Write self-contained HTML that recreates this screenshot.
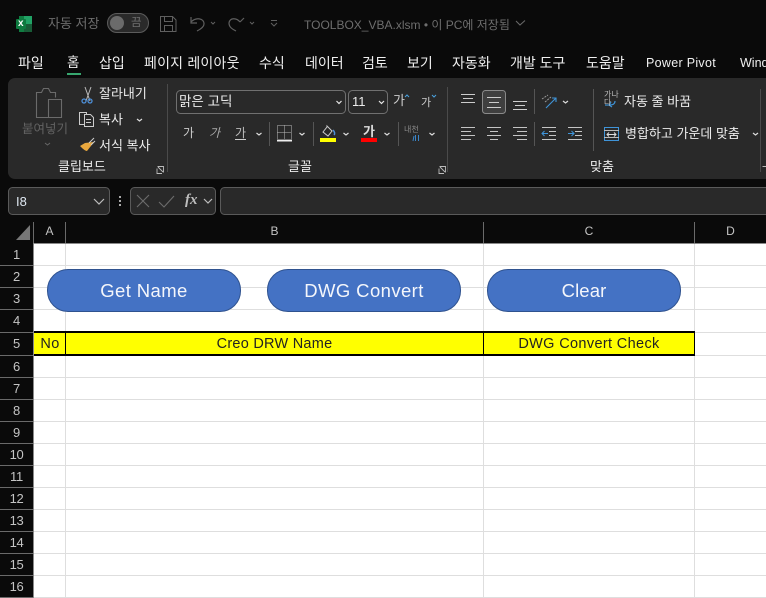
<!DOCTYPE html>
<html lang="ko"><head><meta charset="utf-8">
<style>
html,body{margin:0;padding:0;background:#0a0a0a}
#p{position:relative;width:766px;height:598px;overflow:hidden;background:#0a0a0a;font-family:"Liberation Sans","Noto Sans CJK KR",sans-serif;font-size:13px;color:#ececec}
.t{position:absolute;white-space:nowrap;line-height:16px}
svg{position:absolute;left:0;top:0}
.rn{position:absolute;left:0;width:33px;text-align:center;color:#c4c4c4;font-size:13px;letter-spacing:-.3px;line-height:22px;height:22px}
.btn{position:absolute;top:269px;width:192px;height:41px;border:1px solid #2f528f;border-radius:21px;background:#4472c4;color:#f4f6fb;text-align:center;font-size:18.5px;line-height:41px;letter-spacing:.4px}
.c{position:absolute;top:334px;height:20px;line-height:20px;text-align:center;color:#222;font-size:14.5px;letter-spacing:.25px}
.tab{font-size:14px;top:55px;color:#f0f0f0}
</style></head><body><div id="p">

<svg width="766" height="598" viewBox="0 0 766 598" fill="none">
<!-- excel logo -->
<rect x="19" y="16" width="13" height="16" fill="#107c41"/>
<rect x="24" y="16" width="8" height="8" fill="#21a366"/>
<rect x="24" y="24" width="8" height="8" fill="#185c37"/>
<rect x="16" y="19" width="10" height="10" rx="1" fill="#0e7a3f"/>
<!-- toggle -->
<rect x="107.500" y="13.500" width="41" height="19" rx="9.500" fill="#2a2a2a" stroke="#5c5c5c"/>
<circle cx="117" cy="23" r="7" fill="#6b6b6b"/>
<!-- save -->
<path d="M160.500 16.500h12l3.500 3.500v11.500h-15.500zM164.500 16.500v5h8v-5M164.500 31.500v-6h8v6" stroke="#5f5f5f"/>
<!-- undo redo -->
<path d="M191 17v6h6M191 22c5-5 13-4 13 2 0 3-3 5-7 7" stroke="#5f5f5f" stroke-width="1.200"/>
<path d="M244 18l-4 4M240 22c-3-4-10-5-11 1 0 4 3 6 7 8" stroke="#5f5f5f" stroke-width="1.200"/>
<path d="M211 22l2 2 2-2M250 22l2 2 2-2" stroke="#5f5f5f"/>
<path d="M271 20.500h6M271 23l3 3 3-3" stroke="#5f5f5f"/>
<path d="M516 21l4 4 5-4.500" stroke="#6a6a6a"/>
<!-- home underline -->
<rect x="67" y="73" width="14" height="2" fill="#37a76f"/>

<!-- ribbon -->
<rect x="8" y="78" width="780" height="101" rx="7" fill="#292929"/>
<path d="M167.500 84v88M447.500 87v85M760.500 89v83" stroke="#4a4a4a"/>
<!-- paste -->
<path d="M48.500 117.500h-12v-25h5l2-4h5l2 4h5v5M48.500 99.500h13v18h-13z" stroke="#6b6b6b" stroke-width="1.100"/>
<path d="M45 143l2.500 2 2.500-2" stroke="#666"/>
<!-- scissors -->
<path d="M85 87l5 14M91 87l-5 14" stroke="#bbb"/>
<circle cx="84" cy="101" r="2" stroke="#4d8fd8" stroke-width="1.300"/>
<circle cx="90" cy="101" r="2" stroke="#4d8fd8" stroke-width="1.300"/>
<!-- copy -->
<path d="M84.500 124.500h-5v-12h7v2M84.500 114.500h6l3 3v9h-9zM86 119.500h5M86 122.500h5" stroke="#ccc"/>
<path d="M137 119l2.500 2 2.500-2" stroke="#ddd" stroke-width="1.200"/>
<!-- painter -->
<path d="M85 143l9-1-7 9c-2 0-5-3-7-5z" fill="#e9a73d"/>
<path d="M89 143l5-5M91 145l4-4" stroke="#ccc"/>
<path d="M157.500 166.500h6v6M158 167l5 5M162 173.500h-5v-5" stroke="#bbb" stroke-width=".9"/>

<!-- font combo -->
<rect x="176.500" y="90.500" width="169" height="23" rx="4" fill="#292929" stroke="#707070"/>
<rect x="348.500" y="90.500" width="39" height="23" rx="4" fill="#292929" stroke="#707070"/>
<path d="M336.500 101l2.500 2.500 2.500-2.500M379 101l2.500 2.500 2.500-2.500" stroke="#e6e6e6" stroke-width="1.200"/>
<path d="M405 97l2-2 2 2" stroke="#4aa3e0"/>
<path d="M432 95l2 2 2-2" stroke="#4aa3e0"/>
<!-- font row 2 -->
<rect x="235" y="139" width="11" height="1" fill="#ccc"/>
<path d="M256.500 133l2.500 2 2.500-2M299.500 133l2.500 2 2.500-2M343.500 133l2.500 2 2.500-2M384.500 133l2.500 2 2.500-2M429.500 133l2.500 2 2.500-2" stroke="#ddd" stroke-width="1.200"/>
<path d="M269.500 122v24M313.500 122v24M398.500 122v24" stroke="#555"/>
<path d="M277.500 125.500h14v14h-14zM284.500 125.500v14M277.500 132.500h14" stroke="#bbb" stroke-dasharray="1 1"/>
<rect x="277" y="140" width="15" height="1.500" fill="#eee"/>
<path d="M327 126l5 5-4 5-5-4 4-5z" stroke="#ccc"/><path d="M333 130c2 2 2 4 1 5" stroke="#4d8fd8" stroke-width="1.500"/>
<rect x="320" y="138" width="16" height="4" fill="#ff0"/>
<rect x="361" y="138" width="16" height="4" fill="#f00"/>
<path d="M415.500 141v-6M418.500 141v-6M413 141l1-5" stroke="#3a85c8"/>
<path d="M439.500 166.500h6v6M440 167l5 5M444 173.500h-5v-5" stroke="#bbb" stroke-width=".9"/>

<!-- align -->
<rect x="482.500" y="90.500" width="23" height="23" rx="3" fill="#3f3f3f" stroke="#8a8a8a"/>
<path d="M461 94.500h14M463 98.500h10M461 102.500h14M487 97.500h14M489 102.500h10M487 107.500h14M513 101.500h14M515 105.500h10M513 109.500h14" stroke="#ccc"/>
<path d="M534.500 89v25M534.500 122v24M593.500 89v62" stroke="#555"/>
<path d="M546 108l10-10M552 98h4v4" stroke="#3f94d8" stroke-width="1.100"/>
<path d="M542 99l6-4M545 102l6-5" stroke="#999" stroke-dasharray="2 1"/>
<path d="M563 101l2.500 2 2.500-2" stroke="#ddd" stroke-width="1.200"/>
<path d="M461 127.500h14M461 131.500h10M461 135.500h14M461 139.500h10M487 127.500h14M490 131.500h8M487 135.500h14M490 139.500h8M513 127.500h14M517 131.500h10M513 135.500h14M517 139.500h10" stroke="#c4c4c4"/>
<path d="M542 127.500h14M549 131.500h7M549 135.500h7M542 139.500h14M568 127.500h14M575 131.500h7M575 135.500h7M568 139.500h14" stroke="#c4c4c4"/>
<path d="M548 133.500h-6M544.500 131l-2.500 2.500 2.500 2.500M568 133.500h6M571.500 131l2.500 2.500-2.500 2.500" stroke="#3f94d8"/>
<path d="M605 105c4 0 10 1 10-4M611 102l-2 3 3 2" stroke="#3f94d8" stroke-width="1.200"/>
<rect x="604.500" y="127.500" width="14" height="13" stroke="#3f94d8" fill="none"/>
<path d="M604 130.500h15M604 137.500h15" stroke="#bbb"/><path d="M607 134.500h9M609 132.500l-2 2 2 2M614 132.500l2 2-2 2" stroke="#ddd"/>
<path d="M753 133l2.500 2 2.500-2" stroke="#ddd" stroke-width="1.200"/>
<path d="M762.500 166.500h6v6" stroke="#bbb"/>

<!-- formula bar -->
<rect x="8.500" y="187.500" width="101" height="27" rx="4" fill="#292929" stroke="#5a5a5a"/>
<rect x="130.500" y="187.500" width="85" height="27" rx="4" fill="#292929" stroke="#5a5a5a"/>
<rect x="220.500" y="187.500" width="560" height="27" rx="4" fill="#292929" stroke="#5a5a5a"/>
<path d="M94 199l5 5 5-5M204 199l4 4 4-4" stroke="#bdbdbd" stroke-width="1.200"/>
<circle cx="120" cy="197" r="1" fill="#ddd"/><circle cx="120" cy="201" r="1" fill="#ddd"/><circle cx="120" cy="205" r="1" fill="#ddd"/>
<path d="M137 195l12 12M149 195l-12 12M159 202l5 5 10-11" stroke="#6c6c6c" stroke-width="1.100"/>

<!-- grid white -->
<rect x="33" y="243" width="733" height="355" fill="#fff"/>
<rect x="0" y="219" width="766" height="24" fill="#0a0a0a"/>
<rect x="0" y="243" width="33" height="355" fill="#0a0a0a"/>
<path d="M30 225v15H16z" fill="#777"/>
<g stroke="#dedede">
<path d="M65.500 243v355M483.500 243v355M694.500 243v355"/>
<path d="M33 265.500h733M33 287.500h733M33 309.500h733M33 332.500h733M33 355.500h733M33 377.500h733M33 399.500h733M33 421.500h733M33 443.500h733M33 465.500h733M33 487.500h733M33 509.500h733M33 531.500h733M33 553.500h733M33 575.500h733M33 597.500h733"/>
</g>
<g stroke="#6a6a6a">
<path d="M33.500 222v21M65.500 222v21M483.500 222v21M694.500 222v21"/>
<path d="M0 265.500h33M0 287.500h33M0 309.500h33M0 332.500h33M0 355.500h33M0 377.500h33M0 399.500h33M0 421.500h33M0 443.500h33M0 465.500h33M0 487.500h33M0 509.500h33M0 531.500h33M0 553.500h33M0 575.500h33M0 597.500h33"/>
</g>
<rect x="33" y="243" width="733" height="1" fill="#8a8a8a"/>
<rect x="33" y="243" width="1" height="355" fill="#8a8a8a"/>
<!-- header row 5 -->
<rect x="34" y="333" width="661" height="22" fill="#ff0"/>
<rect x="34" y="331" width="661" height="2" fill="#000"/>
<rect x="34" y="354" width="661" height="2" fill="#000"/>
<rect x="65" y="331" width="1" height="25" fill="#000"/>
<rect x="483" y="331" width="1" height="25" fill="#000"/>
<rect x="694" y="331" width="1" height="25" fill="#000"/>
</svg>

<div class="t" style="left:18px;top:16px;font-size:10px;font-weight:bold;color:#fff">x</div>
<div class="t" style="left:48px;top:16px;color:#6e6e6e;font-size:13px">자동 저장</div>
<div class="t" style="left:131px;top:15px;color:#707070;font-size:11.500px">끔</div>
<div class="t" style="left:304px;top:17px;color:#6e6e6e;font-size:12px">TOOLBOX_VBA.xlsm  •  이 PC에 저장됨</div>

<div class="t tab" style="left:18px">파일</div>
<div class="t tab" style="left:67px;font-size:13.500px">홈</div>
<div class="t tab" style="left:99px">삽입</div>
<div class="t tab" style="left:144px;letter-spacing:.2px">페이지 레이아웃</div>
<div class="t tab" style="left:259px">수식</div>
<div class="t tab" style="left:305px">데이터</div>
<div class="t tab" style="left:362px">검토</div>
<div class="t tab" style="left:407px">보기</div>
<div class="t tab" style="left:452px">자동화</div>
<div class="t tab" style="left:510px">개발 도구</div>
<div class="t tab" style="left:586px">도움말</div>
<div class="t tab" style="left:646px;font-size:12.500px;letter-spacing:.3px">Power Pivot</div>
<div class="t tab" style="left:740px;font-size:12.500px">Wind</div>

<div class="t" style="left:22px;top:121px;color:#626262;font-size:12.500px">붙여넣기</div>
<div class="t" style="left:99px;top:86px">잘라내기</div>
<div class="t" style="left:99px;top:112px">복사</div>
<div class="t" style="left:99px;top:138px">서식 복사</div>
<div class="t" style="left:58px;top:159px">클립보드</div>

<div class="t" style="left:179px;top:94px;font-size:13.500px">맑은 고딕</div>
<div class="t" style="left:352px;top:94px;font-size:13px">11</div>
<div class="t" style="left:393px;top:93px;color:#ccc;font-size:13px">가</div>
<div class="t" style="left:421px;top:95px;color:#ccc;font-size:11px">가</div>
<div class="t" style="left:183px;top:125px;color:#ccc;font-size:12px">가</div>
<div class="t" style="left:209px;top:125px;font-style:italic;color:#aaa;font-size:12px">가</div>
<div class="t" style="left:235px;top:125px;color:#bbb;font-size:12px">가</div>
<div class="t" style="left:363px;top:124px;font-weight:bold;color:#ddd;font-size:13px">가</div>
<div class="t" style="left:404px;top:122px;color:#8a8a8a;font-size:8px">내천</div>
<div class="t" style="left:288px;top:159px">글꼴</div>

<div class="t" style="left:604px;top:91px;color:#bbb;font-size:8px;line-height:8px">가나<br>다</div>
<div class="t" style="left:624px;top:94px">자동 줄 바꿈</div>
<div class="t" style="left:625px;top:126px">병합하고 가운데 맞춤</div>
<div class="t" style="left:590px;top:159px">맞춤</div>

<div class="t" style="left:16px;top:194px;font-size:13px;color:#dfe8f2">I8</div>
<div class="t" style="left:185px;top:192px;font-family:'Liberation Serif',serif;font-style:italic;font-weight:bold;font-size:15px;color:#bdbdbd">fx</div>

<div class="t" style="left:33px;top:223px;width:33px;text-align:center;color:#c4c4c4;font-size:12px">A</div>
<div class="t" style="left:66px;top:223px;width:417px;text-align:center;color:#c4c4c4;font-size:12px">B</div>
<div class="t" style="left:484px;top:223px;width:210px;text-align:center;color:#c4c4c4;font-size:12px">C</div>
<div class="t" style="left:695px;top:223px;width:71px;text-align:center;color:#c4c4c4;font-size:12px">D</div>

<div class="rn" style="top:244px">1</div><div class="rn" style="top:266px">2</div><div class="rn" style="top:288px">3</div><div class="rn" style="top:310px">4</div><div class="rn" style="top:333px">5</div><div class="rn" style="top:356px">6</div><div class="rn" style="top:378px">7</div><div class="rn" style="top:400px">8</div><div class="rn" style="top:422px">9</div><div class="rn" style="top:444px">10</div><div class="rn" style="top:466px">11</div><div class="rn" style="top:488px">12</div><div class="rn" style="top:510px">13</div><div class="rn" style="top:532px">14</div><div class="rn" style="top:554px">15</div><div class="rn" style="top:576px">16</div>

<div class="btn" style="left:47px">Get Name</div>
<div class="btn" style="left:267px">DWG Convert</div>
<div class="btn" style="left:487px;letter-spacing:.1px">Clear</div>

<div class="c" style="left:34px;width:32px;letter-spacing:.4px">No</div>
<div class="c" style="left:66px;width:417px">Creo DRW Name</div>
<div class="c" style="left:484px;width:210px;letter-spacing:.35px">DWG Convert Check</div>
</div></body></html>
